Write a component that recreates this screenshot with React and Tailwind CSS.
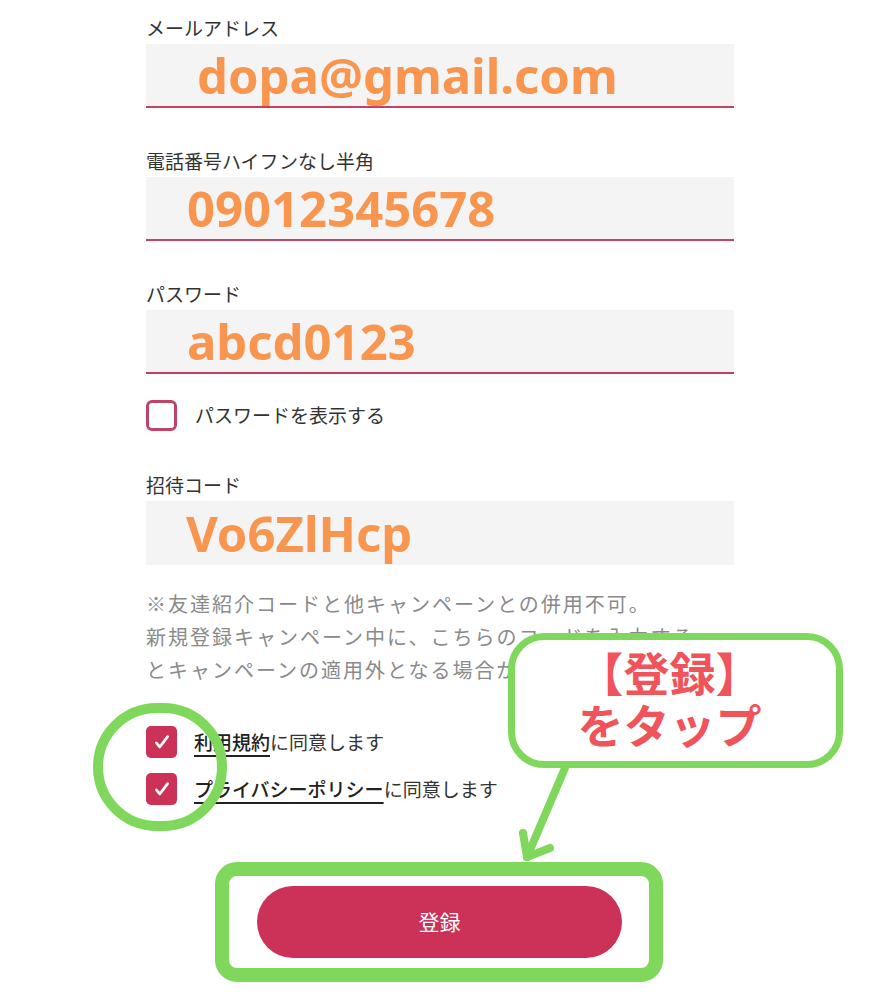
const jp = "font-['Noto_Sans_CJK_JP','Noto_Sans',sans-serif]";

function Field({ label, value, indent, underline = true, className = '' }) {
  return (
    <div className={className}>
      <p className="text-[19px] leading-[28px] text-[#333]">{label}</p>
      <div
        className={`mt-[2px] flex h-[64px] items-center bg-[#f4f4f4] ${indent} ${
          underline ? 'border-b-2 border-[#c73f61]' : ''
        }`}
      >
        <span className="font-['Noto_Sans',sans-serif] text-[49px] font-bold leading-none text-[#f8954f]">
          {value}
        </span>
      </div>
    </div>
  );
}

function CheckBox({ checked }) {
  if (!checked) {
    return <span className="block h-[31px] w-[31px] rounded-[6px] border-[3px] border-[#be4467]" />;
  }
  return (
    <span className="flex h-[32px] w-[31px] items-center justify-center rounded-[5px] bg-[#cc3157]">
      <svg width="18" height="18" viewBox="0 0 16 16" fill="none">
        <path d="M3 8.8l3 3.6L13 3.2" stroke="white" strokeWidth="2.4" strokeLinecap="round" strokeLinejoin="round" />
      </svg>
    </span>
  );
}

export default function App() {
  return (
    <div className={`relative h-[1000px] w-[880px] overflow-hidden bg-white ${jp}`}>
      <div className="ml-[146px] w-[588px] pt-[14px]">
        <Field label="メールアドレス" value="dopa@gmail.com" indent="pl-[51px]" />
        <Field className="mt-[39px]" label="電話番号ハイフンなし半角" value="09012345678" indent="pl-[41px]" />
        <Field className="mt-[39px]" label="パスワード" value="abcd0123" indent="pl-[41px]" />

        <div className="mt-[26px] flex items-center gap-[18px]">
          <CheckBox />
          <span className="text-[19px] text-[#333]">パスワードを表示する</span>
        </div>

        <Field className="mt-[40px]" label="招待コード" value="Vo6ZlHcp" indent="pl-[40px]" underline={false} />

        <p className="mt-[22px] whitespace-nowrap text-[20px] leading-[33px] tracking-[2px] text-[#8a8a8a]">
          ※友達紹介コードと他キャンペーンとの併用不可。
          <br />
          新規登録キャンペーン中に、こちらのコードを入力する
          <br />
          とキャンペーンの適用外となる場合があります。
        </p>

        <div className="mt-[40px] flex flex-col gap-[15px]">
          <div className="flex items-center gap-[17px]">
            <CheckBox checked />
            <span className="text-[19px] text-[#333]">
              <span className="font-medium text-[#222] underline decoration-2 underline-offset-[5px]">利用規約</span>
              に同意します
            </span>
          </div>
          <div className="flex items-center gap-[17px]">
            <CheckBox checked />
            <span className="text-[19px] text-[#333]">
              <span className="font-medium text-[#222] underline decoration-2 underline-offset-[5px]">
                プライバシーポリシー
              </span>
              に同意します
            </span>
          </div>
        </div>
      </div>

      <div className="ml-[215px] mt-[57px] w-[448px] rounded-[22px] border-[14px] border-[#7fd85b] pb-[10px] pl-[28px] pr-[27px] pt-[10px]">
        <button className="flex h-[72px] w-full items-center justify-center rounded-full bg-[#cc3157] text-[21px] text-white">
          登録
        </button>
      </div>

      {/* annotation overlays */}
      <div className="absolute left-[93px] top-[703px] h-[128px] w-[134px] rounded-full border-[10px] border-[#7fd85b]" />

      <svg className="absolute left-[500px] top-[760px]" width="80" height="110" viewBox="0 0 80 110" fill="none">
        <path d="M65 8L27 97" stroke="#7fd85b" strokeWidth="8" strokeLinecap="round" />
        <path d="M23 73L27 97L50 88" stroke="#7fd85b" strokeWidth="8" strokeLinecap="round" strokeLinejoin="round" />
      </svg>

      <div className="absolute left-[508px] top-[633px] flex h-[135px] w-[335px] flex-col items-center rounded-[36px] border-[7px] border-[#7fd85b] bg-white pr-[12px] pt-[5px] text-[46px] font-bold leading-[52px] text-[#f0545a]">
        <span>【登録】</span>
        <span>をタップ</span>
      </div>
    </div>
  );
}
